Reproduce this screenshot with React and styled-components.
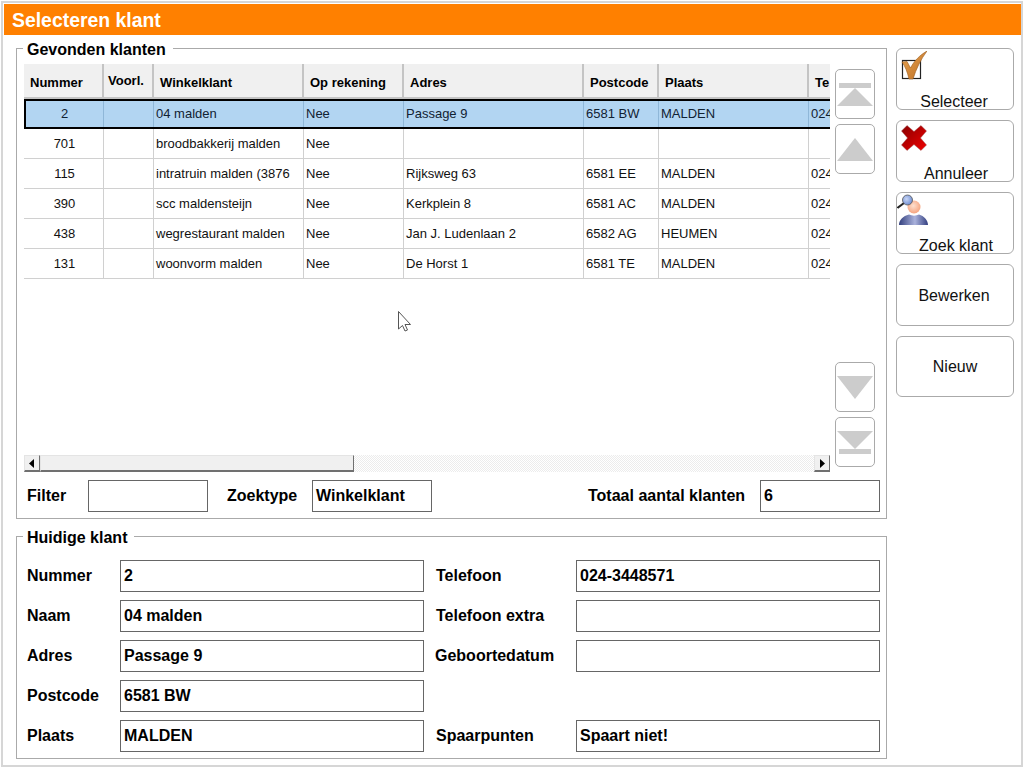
import React from "react";
import styled, { createGlobalStyle } from "styled-components";

const Global = createGlobalStyle`
  html, body { margin: 0; padding: 0; background: #fff; }
  * { box-sizing: border-box; }
  body { font-family: "Liberation Sans", Arial, sans-serif; color: #000; }
`;

const Frame = styled.div`
  width: 1024px;
  height: 768px;
  border: 1px solid #fff;
  overflow: hidden;
`;
const Inner = styled.div`
  height: 100%;
  border: 2px solid #d6d6d6;
  position: relative;
`;
const Title = styled.div`
  margin: 1px 0 0 1px;
  height: 31px;
  width: 1017px;
  background: #ff8000;
  color: #fff;
  font-size: 19.4px;
  font-weight: bold;
  line-height: 33px;
  padding-left: 8px;
`;
const Body = styled.div`
  display: flex;
  gap: 9px;
  padding: 13px 0 0 13px;
`;
const Left = styled.div`
  width: 871px;
  display: flex;
  flex-direction: column;
  gap: 17px;
`;
const Panel = styled.section`
  position: relative;
  height: ${p => p.$h}px;
  border: 1px solid #aaa;
`;
const Legend = styled.div`
  position: absolute;
  left: 6px;
  top: -8px;
  height: 18px;
  padding: 0 7px 0 4px;
  background: #fff;
  font-size: 16px;
  font-weight: bold;
  line-height: 18px;
`;
const TopRow = styled.div`
  display: flex;
  padding: 15px 0 0 7px;
  height: 406px;
`;
const TableWrap = styled.div`
  width: 806px;
  height: 390px;
  overflow: hidden;
  flex: none;
`;
const Table = styled.table`
  border-collapse: separate;
  border-spacing: 0;
  table-layout: fixed;
  width: 880px;
`;
const Th = styled.th`
  height: 35px;
  padding: ${p => (p.$up ? "0 0 1px 4px" : "3px 0 0 6px")};
  background: #f0f0f0;
  border-right: 2px solid #c4c4c4;
  border-bottom: 2px solid #c4c4c4;
  font-size: 13px;
  font-weight: bold;
  text-align: left;
  white-space: nowrap;
  overflow: hidden;
`;
const Row = styled.tr`
  height: 30px;
  background: ${p => (p.$sel ? "#b2d5f2" : "#fff")};
  color: ${p => (p.$sel ? "#123" : "#111")};
  outline: ${p => (p.$sel ? "2px solid #000" : "none")};
  outline-offset: -2px;
`;
const Td = styled.td`
  padding: 0 0 0 2px;
  border-right: 1px solid ${p => (p.$sel ? "#8fb7d8" : "#d0d0d0")};
  border-bottom: 1px solid #d0d0d0;
  font-size: 13px;
  text-align: ${p => (p.$c ? "center" : "left")};
  white-space: nowrap;
  overflow: hidden;
`;
const Arrows = styled.div`
  margin: 5px 0 0 5px;
  width: 40px;
  display: flex;
  flex-direction: column;
  gap: 5px;
  height: 398px;
`;
const ArrowBtn = styled.div`
  width: 40px;
  height: 50px;
  border: 1px solid #aaa;
  border-radius: 5px;
  background: #fff;
  margin-top: ${p => p.$mt || 0}px;
  display: flex;
  align-items: center;
  justify-content: center;
`;
const HScroll = styled.div`
  margin-left: 7px;
  width: 806px;
  height: 17px;
  display: flex;
  background-color: #fff;
  background-image: conic-gradient(#ececec 25%, #fff 0 50%, #ececec 0 75%, #fff 0);
  background-size: 2px 2px;
`;
const Bevel = styled.div`
  height: 17px;
  width: ${p => p.$w}px;
  background: #f0f0f0;
  border-top: 1px solid #e4e4e4;
  border-left: 1px solid #e4e4e4;
  border-right: 1px solid #707070;
  border-bottom: 2px solid #707070;
  display: flex;
  align-items: center;
  justify-content: center;
  margin-left: ${p => p.$ml || 0}px;
`;
const FilterRow = styled.div`
  display: flex;
  align-items: center;
  margin-top: 8px;
  padding-left: 10px;
  height: 32px;
`;
const Label = styled.div`
  font-size: 16px;
  font-weight: bold;
  white-space: nowrap;
  width: ${p => (p.$w ? p.$w + "px" : "auto")};
  margin-left: ${p => p.$ml || 0}px;
`;
const Field = styled.div`
  height: 32px;
  width: ${p => p.$w}px;
  border: 1px solid #666;
  background: #fff;
  font-size: 16px;
  font-weight: bold;
  line-height: 30px;
  padding-left: 3px;
  white-space: nowrap;
`;
const FormGrid = styled.div`
  display: grid;
  grid-template-columns: 93px 304px 152px 304px;
  row-gap: 8px;
  padding: 23px 0 0 10px;
  align-items: center;
`;
const Right = styled.div`
  width: 118px;
  display: flex;
  flex-direction: column;
  gap: 10px;
`;
const SideBtn = styled.div`
  position: relative;
  width: 118px;
  height: ${p => p.$h || 62}px;
  border: 1px solid #aaa;
  border-radius: 6px;
  background: #fff;
  font-size: 16px;
  color: #111;
  display: flex;
  flex-direction: column;
  align-items: center;
  justify-content: ${p => (p.$icon ? "flex-end" : "center")};
`;
const BtnIcon = styled.div`
  position: absolute;
  left: ${p => p.$l}px;
  top: ${p => p.$t}px;
  line-height: 0;
`;
const BtnText = styled.span`
  position: relative;
  left: ${p => p.$dx || 0}px;
  top: ${p => p.$dy || 0}px;
  line-height: 14px;
`;
const Cursor = styled.div`
  position: absolute;
  left: 391px;
  top: 304px;
  line-height: 0;
`;

const Check = () => (
  <svg width="30" height="30" viewBox="0 0 30 30">
    <defs>
      <linearGradient id="chk" x1="0" y1="0" x2="1" y2="1">
        <stop offset="0" stopColor="#e8a552" />
        <stop offset="1" stopColor="#bd6e24" />
      </linearGradient>
    </defs>
    <rect x="5.5" y="9.5" width="18" height="18" fill="#fff" stroke="#222" strokeWidth="1.2" />
    <path d="M5 11 L10 10.5 L13.5 17 C17 10 23 4 30 0 C24 8 19 18 16 28 L12 28 C10.5 21 8 15 5 11Z" fill="url(#chk)" stroke="#9a5a1c" strokeWidth="0.6" />
  </svg>
);
const Cross = () => (
  <svg width="26" height="26" viewBox="0 0 28 28">
    <defs>
      <linearGradient id="crs" x1="0" y1="0" x2="1" y2="1">
        <stop offset="0" stopColor="#8a0000" />
        <stop offset="1" stopColor="#f00000" />
      </linearGradient>
    </defs>
    <path d="M6.5 0.5 L14 7 L21.5 0.5 L27.5 6.5 L21 14 L27.5 21.5 L21.5 27.5 L14 21 L6.5 27.5 L0.5 21.5 L7 14 L0.5 6.5Z" fill="url(#crs)" stroke="#a06060" strokeWidth="0.5" />
  </svg>
);
const Person = () => (
  <svg width="34" height="34" viewBox="0 0 34 34">
    <defs>
      <radialGradient id="face" cx="0.45" cy="0.4" r="0.7">
        <stop offset="0" stopColor="#fde0cf" />
        <stop offset="1" stopColor="#f59a72" />
      </radialGradient>
      <linearGradient id="body" x1="0" y1="0" x2="1" y2="0">
        <stop offset="0" stopColor="#33407e" />
        <stop offset="0.55" stopColor="#aab2dc" />
        <stop offset="1" stopColor="#333f80" />
      </linearGradient>
      <radialGradient id="lens" cx="0.4" cy="0.4" r="0.7">
        <stop offset="0" stopColor="#c8d6f6" />
        <stop offset="1" stopColor="#6484cc" />
      </radialGradient>
    </defs>
    <circle cx="17" cy="13" r="6.5" fill="url(#face)" />
    <path d="M2 31 C2 26 6 22 12 20.5 C15 22 19 22 22 20.5 C27 22 31 26 31 31Z" fill="url(#body)" />
    <path d="M0.5 14 L7 9" stroke="#222" strokeWidth="2" />
    <circle cx="10.5" cy="6" r="5" fill="url(#lens)" stroke="#555" strokeWidth="0.8" />
  </svg>
);
const ArrowIcon = ({ up, bar }) => (
  <svg width="36" height="36" viewBox="0 0 36 36" fill="#cccccc">
    {up && bar && (
      <>
        <rect x="2" y="7" width="32" height="5" />
        <path d="M18 12 L36 30 L0 30Z" />
      </>
    )}
    {up && !bar && <path d="M18 7 L36 30 L0 30Z" />}
    {!up && !bar && <path d="M0 7 L36 7 L18 30Z" />}
    {!up && bar && (
      <>
        <path d="M0 7 L36 7 L18 25Z" />
        <rect x="2" y="25" width="32" height="5" />
      </>
    )}
  </svg>
);
const Tri = ({ left }) => (
  <svg width="6" height="9" viewBox="0 0 6 9">
    <path d={left ? "M5 0 L5 9 L0 4.5Z" : "M1 0 L1 9 L6 4.5Z"} fill="#000" />
  </svg>
);
const Pointer = () => (
  <svg width="18" height="26" viewBox="0 0 18 26">
    <path d="M4.5 4.5 V22 L8.5 18.5 L11 24 L13.5 23 L11 17.5 L16.5 17.5Z" fill="#fff" stroke="#555" strokeWidth="1" />
  </svg>
);

const cols = [
  ["Nummer", 80],
  ["Voorl.", 50, true],
  ["Winkelklant", 150],
  ["Op rekening", 100],
  ["Adres", 180],
  ["Postcode", 75],
  ["Plaats", 150],
  ["Te", 95],
];
const rows = [
  ["2", "", "04 malden", "Nee", "Passage 9", "6581 BW", "MALDEN", "024"],
  ["701", "", "broodbakkerij malden", "Nee", "", "", "", ""],
  ["115", "", "intratruin malden (3876", "Nee", "Rijksweg 63", "6581 EE", "MALDEN", "024"],
  ["390", "", "scc maldensteijn", "Nee", "Kerkplein 8", "6581 AC", "MALDEN", "024"],
  ["438", "", "wegrestaurant malden", "Nee", "Jan J. Ludenlaan 2", "6582 AG", "HEUMEN", "024"],
  ["131", "", "woonvorm malden", "Nee", "De Horst 1", "6581 TE", "MALDEN", "024"],
];
const form = [
  ["Nummer", "2", "Telefoon", "024-3448571", 12],
  ["Naam", "04 malden", "Telefoon extra", "", 12],
  ["Adres", "Passage 9", "Geboortedatum", "", 11],
  ["Postcode", "6581 BW", null, null, 12],
  ["Plaats", "MALDEN", "Spaarpunten", "Spaart niet!", 12],
];

export default function App() {
  return (
    <>
      <Global />
      <Frame>
        <Inner>
          <Title>Selecteren klant</Title>
          <Body>
            <Left>
              <Panel $h={471}>
                <Legend>Gevonden klanten</Legend>
                <TopRow>
                  <TableWrap>
                    <Table>
                      <colgroup>
                        {cols.map(([n, w]) => <col key={n} width={w} />)}
                      </colgroup>
                      <thead>
                        <tr>
                          {cols.map(([n, , up]) => <Th key={n} $up={up}>{n}</Th>)}
                        </tr>
                      </thead>
                      <tbody>
                        {rows.map((r, i) => (
                          <Row key={i} $sel={i === 0}>
                            {r.map((c, j) => <Td key={j} $c={j === 0} $sel={i === 0}>{c}</Td>)}
                          </Row>
                        ))}
                      </tbody>
                    </Table>
                  </TableWrap>
                  <Arrows>
                    <ArrowBtn><ArrowIcon up bar /></ArrowBtn>
                    <ArrowBtn><ArrowIcon up /></ArrowBtn>
                    <ArrowBtn $mt={183}><ArrowIcon /></ArrowBtn>
                    <ArrowBtn><ArrowIcon bar /></ArrowBtn>
                  </Arrows>
                </TopRow>
                <HScroll>
                  <Bevel $w={16}><Tri left /></Bevel>
                  <Bevel $w={314} />
                  <Bevel $w={16} $ml={460}><Tri /></Bevel>
                </HScroll>
                <FilterRow>
                  <Label $w={61}>Filter</Label>
                  <Field $w={120} />
                  <Label $w={85} $ml={19}>Zoektype</Label>
                  <Field $w={120}>Winkelklant</Field>
                  <Label $w={172} $ml={156}>Totaal aantal klanten</Label>
                  <Field $w={120}>6</Field>
                </FilterRow>
              </Panel>
              <Panel $h={223}>
                <Legend>Huidige klant</Legend>
                <FormGrid>
                  {form.map((r) => (
                    <React.Fragment key={r[0]}>
                      <Label>{r[0]}</Label>
                      <Field $w={304}>{r[1]}</Field>
                      {r[2] ? (
                        <>
                          <Label $ml={r[4]}>{r[2]}</Label>
                          <Field $w={304}>{r[3]}</Field>
                        </>
                      ) : (
                        <>
                          <span />
                          <span />
                        </>
                      )}
                    </React.Fragment>
                  ))}
                </FormGrid>
              </Panel>
            </Left>
            <Right>
              <SideBtn $icon>
                <BtnIcon $l={0} $t={2}><Check /></BtnIcon>
                <BtnText $dx={-1}>Selecteer</BtnText>
              </SideBtn>
              <SideBtn $icon>
                <BtnIcon $l={4} $t={4}><Cross /></BtnIcon>
                <BtnText $dx={1}>Annuleer</BtnText>
              </SideBtn>
              <SideBtn $icon>
                <BtnIcon $l={0} $t={1}><Person /></BtnIcon>
                <BtnText $dx={1}>Zoek klant</BtnText>
              </SideBtn>
              <SideBtn><BtnText $dx={-1} $dy={1}>Bewerken</BtnText></SideBtn>
              <SideBtn $h={61}><BtnText>Nieuw</BtnText></SideBtn>
            </Right>
          </Body>
          <Cursor><Pointer /></Cursor>
        </Inner>
      </Frame>
    </>
  );
}
